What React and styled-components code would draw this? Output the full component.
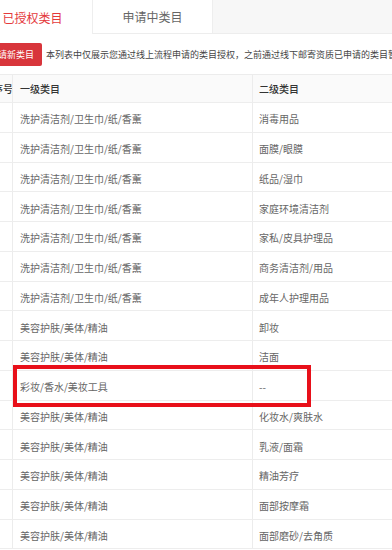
import styled, { createGlobalStyle } from "styled-components";

const GlobalStyle = createGlobalStyle`
  html, body {
    margin:0;
    padding:0;
    background:#fff;
    overflow:hidden;
  }
  body{
    font-family:"Noto Sans CJK SC", "Noto Sans", sans-serif;
  }
`;

const Page = styled.div`
  width:460px;
  margin-left:-27px;
`;

const TabBar = styled.div`
  display:flex;
  height:34px;
  background:#f7f7f7;
  border-bottom:1px solid #ededed;
  box-sizing:border-box;
`;

const Tab = styled.div`
  width:120px;
  display:flex;
  align-items:center;
  justify-content:center;
  background:#fff;
  border-right:1px solid #eee;
  box-sizing:border-box;
  font-size:12px;
  color:${p => (p.$active ? "#e4393c" : "#666")};
  margin-bottom:${p => (p.$active ? "-1px" : "0")};
`;

const Notice = styled.div`
  height:40px;
  display:flex;
  align-items:center;
  padding-left:8px;
  gap:4px;
  white-space:nowrap;
`;

const ApplyButton = styled.div`
  height:23px;
  padding:0 8px;
  display:flex;
  align-items:center;
  background:#d8353b;
  color:#fff;
  font-size:9px;
  border-radius:2px;
  margin-top:1px;
`;

const NoticeText = styled.span`
  font-size:9px;
  color:#444;
`;

const Table = styled.div`
  border-top:1px solid #ececec;
`;

const Row = styled.div`
  position:relative;
  display:grid;
  grid-template-columns:40px 240px 1fr;
  height:${p => (p.$head ? "28px" : "29.75px")};
  background:${p => (p.$head ? "#fafafa" : "#fff")};
  border-bottom:1px solid #ededed;
  box-sizing:border-box;
`;

const Cell = styled.div`
  display:flex;
  align-items:center;
  padding:${p => (p.$head ? "0" : "3px")} 0 0 ${p => p.$pad || 7}px;
  border-right:1px solid #ececec;
  font-size:10px;
  color:${p => (p.$head ? "#333" : "#666")};
  font-weight:${p => (p.$head ? 500 : 400)};
  white-space:nowrap;
  overflow:hidden;
`;

const Highlight = styled.div`
  position:absolute;
  z-index:2;
  left:40px;
  top:-6px;
  width:298px;
  height:42px;
  border:4px solid #e8101a;
  box-sizing:border-box;
  pointer-events:none;
`;

const rows = [
  ["洗护清洁剂/卫生巾/纸/香薰", "消毒用品"],
  ["洗护清洁剂/卫生巾/纸/香薰", "面膜/眼膜"],
  ["洗护清洁剂/卫生巾/纸/香薰", "纸品/湿巾"],
  ["洗护清洁剂/卫生巾/纸/香薰", "家庭环境清洁剂"],
  ["洗护清洁剂/卫生巾/纸/香薰", "家私/皮具护理品"],
  ["洗护清洁剂/卫生巾/纸/香薰", "商务清洁剂/用品"],
  ["洗护清洁剂/卫生巾/纸/香薰", "成年人护理用品"],
  ["美容护肤/美体/精油", "卸妆"],
  ["美容护肤/美体/精油", "洁面"],
  ["彩妆/香水/美妆工具", "--", true],
  ["美容护肤/美体/精油", "化妆水/爽肤水"],
  ["美容护肤/美体/精油", "乳液/面霜"],
  ["美容护肤/美体/精油", "精油芳疗"],
  ["美容护肤/美体/精油", "面部按摩霜"],
  ["美容护肤/美体/精油", "面部磨砂/去角质"],
];

const App = () => (
  <>
    <GlobalStyle />
    <Page>
      <TabBar>
        <Tab $active>已授权类目</Tab>
        <Tab>申请中类目</Tab>
      </TabBar>
      <Notice>
        <ApplyButton>申请新类目</ApplyButton>
        <NoticeText>
          本列表中仅展示您通过线上流程申请的类目授权，之前通过线下邮寄资质已申请的类目暂不在此展示
        </NoticeText>
      </Notice>
      <Table>
        <Row $head>
          <Cell $head $pad={20}>序号</Cell>
          <Cell $head>一级类目</Cell>
          <Cell $head $pad={6}>二级类目</Cell>
        </Row>
        {rows.map(([first, second, marked], i) => (
          <Row key={i}>
            <Cell $pad={20} />
            <Cell>{first}</Cell>
            <Cell $pad={6}>{second}</Cell>
            {marked && <Highlight />}
          </Row>
        ))}
      </Table>
    </Page>
  </>
);

export default App;
